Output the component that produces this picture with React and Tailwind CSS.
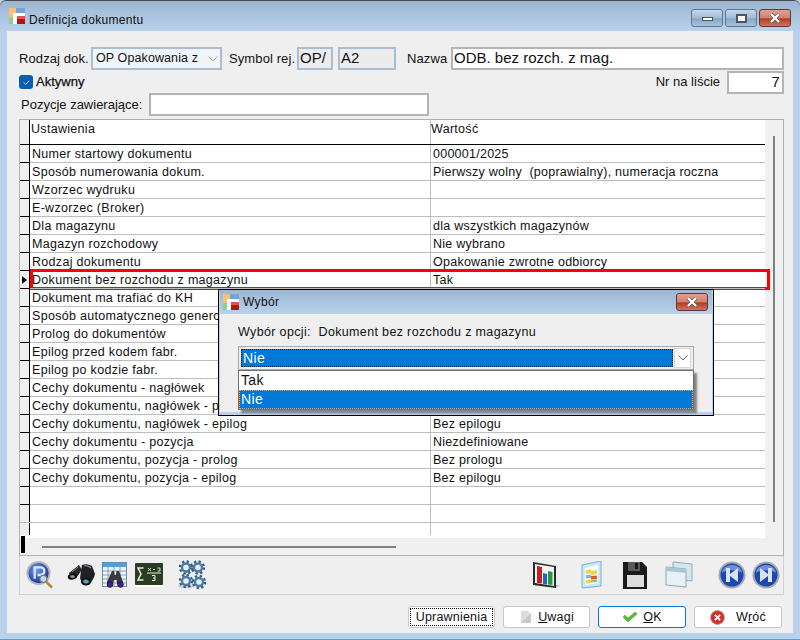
const rows = [
  ["Numer startowy dokumentu", "000001/2025"],
  ["Sposób numerowania dokum.", "Pierwszy wolny  (poprawialny), numeracja roczna"],
  ["Wzorzec wydruku", ""],
  ["E-wzorzec (Broker)", ""],
  ["Dla magazynu", "dla wszystkich magazynów"],
  ["Magazyn rozchodowy", "Nie wybrano"],
  ["Rodzaj dokumentu", "Opakowanie zwrotne odbiorcy"],
  ["Dokument bez rozchodu z magazynu", "Tak"],
  ["Dokument ma trafiać do KH", ""],
  ["Sposób automatycznego generowania", ""],
  ["Prolog do dokumentów", ""],
  ["Epilog przed kodem fabr.", ""],
  ["Epilog po kodzie fabr.", ""],
  ["Cechy dokumentu - nagłówek", ""],
  ["Cechy dokumentu, nagłówek - prolog", ""],
  ["Cechy dokumentu, nagłówek - epilog", "Bez epilogu"],
  ["Cechy dokumentu - pozycja", "Niezdefiniowane"],
  ["Cechy dokumentu, pozycja - prolog", "Bez prologu"],
  ["Cechy dokumentu, pozycja - epilog", "Bez epilogu"],
  ["", ""],
  ["", ""],
];

function AppIcon({ className }) {
  return (
    <svg viewBox="0 0 16 16" className={className}>
      <rect x="0" y="0" width="7" height="5" fill="#fbbf77" />
      <rect x="7" y="0" width="9" height="5" fill="#6fa5e0" />
      <rect x="0" y="5" width="4" height="4" fill="#fbbf77" />
      <rect x="0" y="9" width="4" height="7" fill="#8fd08a" />
      <rect x="4" y="5" width="12" height="11" fill="#fff" />
      <rect x="8" y="8" width="8" height="8" fill="#b01515" />
      <rect x="8" y="8" width="8" height="3" fill="#e25050" />
    </svg>
  );
}

function CloseBtn({ className }) {
  return (
    <div className={`flex items-center justify-center rounded-[3px] border border-[#5a3a3a] bg-[linear-gradient(#e0a090_0%,#d2806e_50%,#b53a24_55%,#cc7662_100%)] ${className}`}>
      <svg viewBox="0 0 12 10" className="h-[10px] w-[12px]">
        <path d="M2 1 L10 9 M10 1 L2 9" stroke="#555" strokeWidth="3.6" />
        <path d="M2 1 L10 9 M10 1 L2 9" stroke="#fff" strokeWidth="2.4" />
      </svg>
    </div>
  );
}

function PSearch() {
  return (
    <svg viewBox="0 0 28 30" className="h-[30px] w-[28px]">
      <defs>
        <radialGradient id="pb" cx="40%" cy="35%" r="70%">
          <stop offset="0%" stopColor="#6f9ff0" />
          <stop offset="100%" stopColor="#0f2f96" />
        </radialGradient>
      </defs>
      <circle cx="13" cy="13" r="12.5" fill="#b5b5b8" />
      <circle cx="13" cy="13" r="10.5" fill="url(#pb)" />
      <path d="M9 19 V7 H15 a3.5 3.5 0 0 1 0 8 H12" fill="none" stroke="#dfe8f8" strokeWidth="2.4" />
      <circle cx="18" cy="19" r="3.6" fill="#bcd9ef" stroke="#777" strokeWidth="1.2" />
      <path d="M21 22 L27 28" stroke="#b8863b" strokeWidth="2.6" />
    </svg>
  );
}

function Binoculars() {
  return (
    <svg viewBox="0 0 28 24" className="h-[24px] w-[28px]">
      <path d="M2 10 L12 2 L15 7 L9 15 L4 16 Z" fill="#26272a" />
      <path d="M15 2 Q20 0 25 3 L28 11 Q27 16 22 22 L15 20 L13 15 Z" fill="#1f2124" />
      <path d="M17 3 Q21 2 24 5" stroke="#9a9da2" strokeWidth="1.2" fill="none" />
      <path d="M5 9 L11 4" stroke="#888" strokeWidth="1" />
      <ellipse cx="5.5" cy="13.5" rx="4.8" ry="3" fill="#0e0e10" transform="rotate(-15 5.5 13.5)" />
      <ellipse cx="5.5" cy="13.5" rx="2.4" ry="1.3" fill="#7fa5b8" />
      <ellipse cx="19" cy="18.5" rx="5.2" ry="4" fill="#0e0e10" />
      <ellipse cx="19" cy="18.5" rx="2.8" ry="2.1" fill="#4fa0c4" />
    </svg>
  );
}

function GridBinoculars() {
  return (
    <svg viewBox="0 0 26 26" className="h-[26px] w-[26px]">
      <rect x="0.5" y="0.5" width="24" height="24" fill="#eef3f8" stroke="#6d8ca6" />
      <rect x="1" y="1" width="23" height="4" fill="#4aa3e0" />
      <path d="M1 9H24M1 13H24M1 17H24M1 21H24M6 5V25M12 5V25M18 5V25" stroke="#6f8ea8" strokeWidth="0.8" />
      <path d="M10 9 H12 L12.5 13 H14 L14.5 9 H17 L21 20 V22 H15 L14.5 18 H12 L11 22 H5 V20 Z" fill="#3a3a42" />
      <circle cx="8" cy="22.5" r="2.8" fill="#4a1d9c" stroke="#111" strokeWidth="0.8" />
      <circle cx="18.5" cy="22.5" r="2.8" fill="#4a1d9c" stroke="#111" strokeWidth="0.8" />
    </svg>
  );
}

function Sigma() {
  return (
    <svg viewBox="0 0 28 24" className="h-[24px] w-[28px]">
      <rect x="0" y="0" width="28" height="22" rx="1" fill="#2a3d22" />
      <rect x="0" y="22" width="28" height="2" fill="#fff" />
      <path d="M8.5 5 H3 L6 11 L3 17 H8.5" fill="none" stroke="#e8efd8" strokeWidth="1.5" />
      <path d="M12 10 H26" stroke="#e8efd8" strokeWidth="1" />
      <path d="M13 5 L16 8 M16 5 L13 8 M18 6.5 H20 M22.5 5 H25 V8 H22.5" stroke="#e8efd8" strokeWidth="0.9" fill="none" />
      <path d="M17 12.5 H20 V17.5 H17 M18 15 H20" stroke="#e8efd8" strokeWidth="1" fill="none" />
    </svg>
  );
}

function Gear({ cx, cy }) {
  return (
    <g>
      <circle cx={cx} cy={cy} r="6" fill="none" stroke="#2f5f8a" strokeWidth="2.4" strokeDasharray="2.3 2.4" />
      <circle cx={cx} cy={cy} r="4" fill="none" stroke="#4a7ca6" strokeWidth="2.4" />
    </g>
  );
}

function Gears() {
  return (
    <svg viewBox="0 0 28 30" className="h-[30px] w-[28px]">
      <ellipse cx="8" cy="26" rx="8" ry="2" fill="#ccc" />
      <Gear cx={8} cy={7.5} />
      <Gear cx={20} cy={7.5} />
      <Gear cx={8} cy={21} />
      <Gear cx={21} cy={22} />
    </svg>
  );
}

function ChartIcon() {
  return (
    <svg viewBox="0 0 28 28" className="h-[28px] w-[28px]">
      <path d="M1 1 L24 5 V27 L1 24 Z" fill="#2a2a2a" />
      <path d="M3 3 L22 6 V25 L3 22 Z" fill="#f4f4f4" />
      <path d="M5 5 L10 6 V22.5 L5 22 Z" fill="#c8201f" />
      <path d="M11 12 L15 13 V23.5 L11 23 Z" fill="#2167c0" />
      <path d="M16 10 L20.5 11 V24 L16 23.5 Z" fill="#1f9a3c" />
      <path d="M24 24 L28 24 L24 27 Z" fill="#bbb" />
    </svg>
  );
}

function SheetIcon() {
  return (
    <svg viewBox="0 0 22 28" className="h-[28px] w-[22px]">
      <path d="M2 4 L21 0 V25 L2 27 Z" fill="#cfe6f7" stroke="#6fb0e0" />
      <path d="M5 7 L18 4 V22 L5 24 Z" fill="#fff" />
      <path d="M6 9 L11 8 V12 L6 13 Z" fill="#f2d33c" />
      <path d="M11 10 L17 9 V13 L11 14 Z" fill="#f2d33c" />
      <path d="M6 14 L11 13.5 V17 L6 17.5 Z" fill="#7fb6e6" />
      <path d="M11 15 L17 14.5 V18 L11 18.5 Z" fill="#e5572e" />
      <path d="M6 19 L11 18.5 V22 L6 22.5 Z" fill="#f2d33c" />
      <path d="M11 19 L17 18.5 V21 L11 21.5 Z" fill="#8dc86a" />
    </svg>
  );
}

function FloppyIcon() {
  return (
    <svg viewBox="0 0 24 28" className="h-[28px] w-[24px]">
      <path d="M0 1 H19 L24 6 V28 H0 Z" fill="#1a1a1a" />
      <rect x="5" y="1" width="12" height="9" fill="#5a5a5a" />
      <rect x="12" y="2" width="3" height="6" fill="#1a1a1a" />
      <rect x="4" y="14" width="17" height="12" fill="#dcdcdc" />
    </svg>
  );
}

function WindowsIcon() {
  return (
    <svg viewBox="0 0 28 28" className="h-[28px] w-[28px]">
      <path d="M8 1 L27 3 V20 L8 18 Z" fill="#d6e6ee" stroke="#8fb0c0" />
      <path d="M1 6 L21 8 V26 L1 24 Z" fill="#e9f1f5" stroke="#86a8b8" />
      <path d="M1 6 L21 8 V12 L1 10 Z" fill="#a8c8d8" />
    </svg>
  );
}

function NavIcon({ next }) {
  return (
    <svg viewBox="0 0 28 28" className="h-[28px] w-[28px]">
      <circle cx="14" cy="14" r="13.5" fill="#a7a7ad" />
      <circle cx="14" cy="14" r="11.5" fill="#1c47b0" />
      <path d="M4 12 a10 8 0 0 1 20 0 a12 6 0 0 0 -20 0" fill="#6f8fdc" />
      {next ? (
        <path d="M8 7 L16 13 V7 H20 V21 H16 V15 L8 21 Z" fill="#d8e4f4" />
      ) : (
        <path d="M20 7 L12 13 V7 H8 V21 H12 V15 L20 21 Z" fill="#d8e4f4" />
      )}
    </svg>
  );
}

function Chevron() {
  return (
    <svg viewBox="0 0 10 6" className="h-[6px] w-[10px]">
      <path d="M0.5 0.5 L5 5 L9.5 0.5" fill="none" stroke="#666" strokeWidth="1" />
    </svg>
  );
}

const boxBlue = "border-2 border-[#a9bdd3]";

export default function App() {
  return (
    <div className="relative flex h-[640px] w-[800px] flex-col overflow-hidden bg-[#b9d1ea] font-['Liberation_Sans',Arial,sans-serif] text-[13px] tracking-[0.1px] text-[#111]">
      <div className="flex h-[31px] shrink-0 items-center rounded-t-[6px] border-t border-[#4a4a4a] bg-[linear-gradient(#9cb6d2,#b9d1ea)] pl-[9px] pr-[9px]">
        <AppIcon className="h-[16px] w-[16px]" />
        <span className="ml-[4px] mt-[7px] flex-1 text-[12px] leading-none tracking-[0.3px] text-[#111]">Definicja dokumentu</span>
        <div className="mt-[8px] flex gap-[2px] self-start">
          <div className="flex h-[18px] w-[32px] items-center justify-center rounded-[3px] border border-[#5c7590] bg-[linear-gradient(#c4d6ea,#a0bbd6_50%,#88a7c5_55%,#a9c2dc)]">
            <div className="mt-[2px] h-[4px] w-[11px] border border-[#555] bg-white" />
          </div>
          <div className="flex h-[18px] w-[32px] items-center justify-center rounded-[3px] border border-[#5c7590] bg-[linear-gradient(#c4d6ea,#a0bbd6_50%,#88a7c5_55%,#a9c2dc)]">
            <div className="h-[9px] w-[11px] border-2 border-[#555] bg-white" />
          </div>
          <CloseBtn className="h-[18px] w-[32px]" />
        </div>
      </div>

      <div className="mx-[7px] flex min-h-0 flex-1 flex-col bg-[#efefef] pl-[12px] pr-[9px] pt-[16px]">
        <div className="flex h-[23px] items-center">
          <span className="w-[72px] whitespace-nowrap">Rodzaj dok.</span>
          <div className={`flex h-[23px] w-[131px] items-center bg-[#f0f5fa] pl-[3px] ${boxBlue}`}>
            <span className="flex-1 overflow-hidden whitespace-nowrap text-[12.5px] tracking-[0.1px]">OP Opakowania z</span>
            <div className="flex h-full w-[15px] items-center justify-center bg-[#f4f4f4] opacity-60"><Chevron /></div>
          </div>
          <span className="ml-[7px] w-[68px] whitespace-nowrap">Symbol rej.</span>
          <div className={`flex h-[23px] w-[36px] items-center bg-[#ececec] pl-[1px] text-[15px] ${boxBlue}`}>OP/</div>
          <div className={`ml-[5px] flex h-[23px] w-[58px] items-center bg-[#ececec] pl-[1px] text-[15px] ${boxBlue}`}>A2</div>
          <span className="ml-[11px] w-[44px]">Nazwa</span>
          <div className="flex h-[23px] w-[333px] items-center border-2 border-[#b4b4b4] bg-white pl-[1px] text-[15px] tracking-normal">ODB. bez rozch. z mag.</div>
        </div>
        <div className="flex h-[23px] items-center pt-[1px]">
          <div className="flex h-[14px] w-[14px] items-center justify-center rounded-[3px] bg-[#0a5fb4]">
            <svg viewBox="0 0 10 10" className="h-[9px] w-[9px]"><path d="M2 5 L4.2 7.2 L8 3" fill="none" stroke="#cfe2f6" strokeWidth="1" /></svg>
          </div>
          <span className="ml-[3px] flex-1 text-[13px] tracking-normal [-webkit-text-stroke:0.25px_#111]">Aktywny</span>
          <span className="mr-[7px] tracking-normal">Nr na liście</span>
          <div className="flex h-[23px] w-[57px] items-center justify-end border-2 border-[#b4b4b4] bg-white pr-[2px] text-[15px]">7</div>
        </div>
        <div className="flex h-[23px] items-center">
          <span className="ml-[2px] w-[128px] whitespace-nowrap tracking-normal">Pozycje zawierające:</span>
          <div className="h-[23px] w-[280px] border-2 border-[#b4b4b4] bg-white" />
        </div>

        <div className="mt-[3px] flex h-[437px] w-[765px] shrink-0 flex-col border border-[#b0b0b0] bg-[#f0f0f0] leading-none tracking-[0.3px]">
          <div className="flex min-h-0 flex-1">
            <div className="flex w-[745px] flex-col bg-white">
              <div className="flex h-[24px] shrink-0">
                <div className="w-[10px] border-r border-black bg-[#efefef]" />
                <div className="w-[401px] border-r border-[#bdbdbd] pl-[1px] pt-[3px] text-[12.5px]">Ustawienia</div>
                <div className="flex-1 pt-[3px] text-[12.5px]">Wartość</div>
              </div>
              {rows.map(([a, b], i) => (
                <div key={i} className={`relative flex h-[18px] shrink-0 border-t ${i === 0 ? "border-black" : "border-[#bdbdbd]"}`}>
                  <div className="-mt-px flex w-[10px] items-center border-r border-t border-r-black border-t-black bg-[#efefef]">
                    {i === 7 && <div className="ml-[2px] h-0 w-0 border-y-[4px] border-l-[5px] border-y-transparent border-l-black" />}
                  </div>
                  <div className="flex w-[401px] items-center overflow-hidden whitespace-nowrap border-r border-[#bdbdbd] pl-[2px] pr-1 pt-[2px] text-[12.5px]">{a}</div>
                  <div className="flex flex-1 items-center whitespace-pre pl-[2px] pt-[2px] text-[12.5px] tracking-[0.25px]">{b}</div>
                  {i === 7 && <div className="absolute -top-[2px] bottom-[-2px] left-[10px] right-[-5px] border-[3px] border-[#f00]" />}
                </div>
              ))}
              <div className="flex h-[13px] border-t border-[#bdbdbd]">
                <div className="w-[10px] border-r border-black bg-[#efefef]" />
                <div className="w-[401px] border-r border-[#bdbdbd]" />
              </div>
            </div>
            <div className="flex flex-1 justify-center pb-[16px] pt-[16px]">
              <div className="-ml-[1px] w-[2px] bg-[#808080]" />
            </div>
          </div>
          <div className="flex h-[17px] shrink-0 items-center bg-[#f0f0f0]">
            <div className="mb-[1px] ml-[1px] -mt-[3px] h-[17px] w-[4px] bg-black" />
            <div className="ml-[17px] h-[2px] w-[354px] bg-[#808080]" />
          </div>
        </div>

        <div className="flex h-[39px] w-[765px] shrink-0 items-center border-x border-b border-[#cfcfcf] pl-[6px] pr-[3px]">
          <PSearch />
          <div className="ml-[14px]"><Binoculars /></div>
          <div className="ml-[7px]"><GridBinoculars /></div>
          <div className="ml-[7px]"><Sigma /></div>
          <div className="ml-[15px]"><Gears /></div>
          <div className="ml-[326px]"><ChartIcon /></div>
          <div className="ml-[20px]"><SheetIcon /></div>
          <div className="ml-[21px]"><FloppyIcon /></div>
          <div className="ml-[18px]"><WindowsIcon /></div>
          <div className="ml-[25px]"><NavIcon /></div>
          <div className="ml-[6px]"><NavIcon next /></div>
        </div>

        <div className="mt-[11px] flex items-center gap-[8px] pl-[389px] text-[12.5px] tracking-[0.2px]">
          <div className="flex h-[22px] w-[87px] items-center justify-center rounded-[3px] border border-[#c8c8c8] bg-white p-[1px]">
            <div className="flex h-full w-full items-center justify-center border border-dotted border-black">Uprawnienia</div>
          </div>
          <div className="flex h-[22px] w-[87px] items-center justify-center gap-[5px] rounded-[3px] border border-[#c8c8c8] bg-white">
            <svg viewBox="0 0 14 16" className="h-[16px] w-[14px]"><path d="M2 2 H9 L11 5 L3 14 H2 Z" fill="#dcdcdc" /><path d="M2 14 L12 4 L12 14 Z" fill="#c8c8c8" /></svg>
            <span><span className="underline">U</span>wagi</span>
          </div>
          <div className="flex h-[22px] w-[88px] items-center justify-center gap-[5px] rounded-[3px] border border-[#0078d7] bg-white">
            <svg viewBox="0 0 16 12" className="h-[12px] w-[16px]"><path d="M1 6 L3 4 L6 7 L13 1 L15 3 L6 11 Z" fill="#5cbb3c" stroke="#3f9a2a" strokeWidth="0.5" /></svg>
            <span><span className="underline">O</span>K</span>
          </div>
          <div className="flex h-[22px] w-[88px] items-center justify-center gap-[11px] rounded-[3px] border border-[#c8c8c8] bg-white">
            <svg viewBox="0 0 14 14" className="h-[15px] w-[15px]"><circle cx="7" cy="7" r="6.5" fill="#d62c2c" stroke="#aaa" strokeWidth="0.8" /><path d="M4.5 4.5 L9.5 9.5 M9.5 4.5 L4.5 9.5" stroke="#fff" strokeWidth="1.8" /></svg>
            <span>W<span className="underline">r</span>óć</span>
          </div>
        </div>
      </div>
      <div className="h-[7px] shrink-0 border-b border-[#3fb0c9] bg-[#b9d1ea]" />

      <div className="absolute left-[218px] top-[289px] flex h-[127px] w-[496px] flex-col border border-black bg-[#b9d1ea] px-[1px] pb-[3px] tracking-[0.35px]">
        <div className="flex h-[24px] shrink-0 items-center bg-[linear-gradient(#9cb6d2,#b9d1ea)] pl-[3px] pr-[4px]">
          <AppIcon className="h-[16px] w-[16px]" />
          <span className="ml-[4px] flex-1 text-[12px]">Wybór</span>
          <CloseBtn className="h-[18px] w-[32px]" />
        </div>
        <div className="flex-1 bg-[#efefef] pl-[18px] pt-[10px]">
          <div className="h-[16px] whitespace-pre text-[12.5px] leading-[16px]">Wybór opcji:  Dokument bez rozchodu z magazynu</div>
          <div className="mt-[6px] flex h-[24px] w-[456px] items-center border border-[#a8a8a8] bg-[#efefef] px-[2px]">
            <div className="flex h-[18px] flex-1 items-center border border-dotted border-[#222] bg-[#0078d7] pl-[1px] text-[14px] text-white">Nie</div>
            <div className="ml-[1px] flex h-[20px] w-[17px] items-center justify-center border border-[#d8d8d8] bg-white"><Chevron /></div>
          </div>
          <div className="w-[456px] border border-[#707070] bg-white text-[14px] shadow-[3px_3px_2px_rgba(0,0,0,0.45)]">
            <div className="flex h-[19px] items-center pl-[2px]">Tak</div>
            <div className="flex h-[19px] items-center border border-dotted border-[#e8a868] bg-[#0078d7] pl-[1px] text-white">Nie</div>
          </div>
        </div>
      </div>
    </div>
  );
}
